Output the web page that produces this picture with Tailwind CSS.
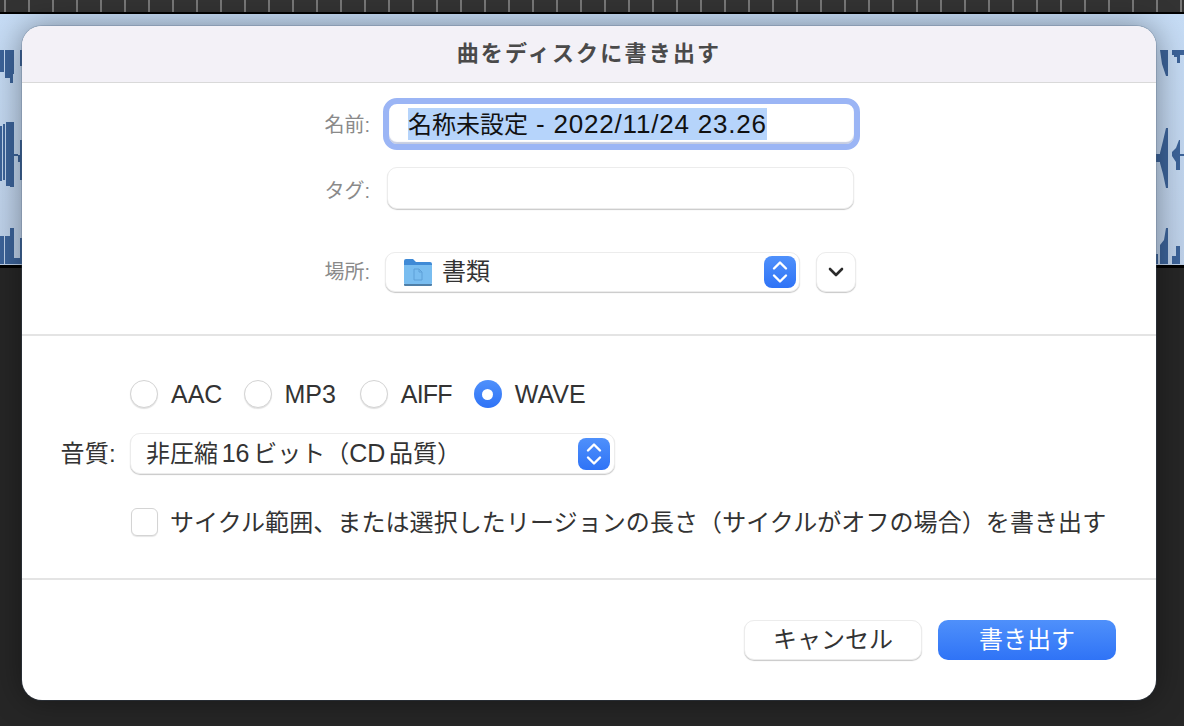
<!DOCTYPE html>
<html lang="ja">
<head>
    <meta charset="UTF-8">
    <title>曲をディスクに書き出す</title>
    <script src="https://cdn.jsdelivr.net/npm/@tailwindcss/browser@4"></script>
</head>
<body class="bg-[#262626] overflow-hidden font-['Liberation_Sans','Noto_Sans_CJK_JP',sans-serif]">
    <div class="relative w-[1184px] h-[726px] flex flex-col">
        <!-- ruler and track behind the sheet -->
        <div class="h-3 bg-[repeating-linear-gradient(90deg,#333_0,#333_4px,#777_4px,#777_6px,#333_6px,#333_24px)]"></div>
        <div class="h-[2px] bg-black"></div>
        <div class="relative h-[251px] bg-gradient-to-b from-[#c6dcf5] to-[#bdd0e8]">
            <svg class="absolute left-0 top-[-14px]" width="1184" height="265" fill="#3c6399">
                <path d="M0 50h4v22H0zM5 50h9v24h-1v9h-3v-5H5zM20 50h2v16h-2z"/>
                <path d="M0 126h2v55H0zM3 124h2v56H3zM6 122h8v32h4v1h2v7h-2v-6h-4v31h-4v-1H6zM20 140h2v40h-2z"/>
                <path d="M0 236h4v28H0zM5 236h5v28H5zM10 228h4v36h-4zM14 258h6v6h-6zM20 238h2v26h-2z"/>
                <path d="M1160 50h8v26h-2l-4-12zM1172 50h8v13h-3v-6h-3v-2h-2zM1180 50h4v5h-4z"/>
                <path d="M1156 154h4v-1l3-12 3-13h2v60h-2l-3-14-3-11v-1h-4zM1172 152l4-4 3-8h1v30h-4v-8l-4-6zM1180 154h4v2h-4z"/>
                <path d="M1156 254h2v10h-2zM1160 245l4-5 2-12h2v36h-8zM1172 256h4v-10h4v18h-8z"/>
            </svg>
        </div>
        <div class="h-[3px] bg-black"></div>
        <div class="flex-1 bg-[#262626]"></div>

        <!-- export sheet -->
        <div class="absolute left-[22px] top-[26px] w-[1134px] h-[674px] bg-white rounded-[20px] overflow-hidden flex flex-col text-[#333] shadow-[0_0_0_1px_rgba(70,90,120,0.25),0_0_32px_rgba(0,0,0,0.4)]">
            <div class="h-[57px] shrink-0 bg-[#f3f1f7] border-b border-[#d9d9d9] flex items-center justify-center pb-[2px] text-[22px] font-bold text-[#4a4a4a] tracking-[2.2px]">曲をディスクに書き出す</div>

            <div class="h-[253px] shrink-0 border-b-2 border-[#e4e4e4] flex flex-col">
                <div class="flex items-center mt-[15px] h-[52px]">
                    <div class="w-[348px] text-right text-[20px] text-[#8a8a8a] pt-[2px]">名前:</div>
                    <div class="ml-[13px] w-[477px] h-[52px] rounded-[14px] border-[6px] border-[#9bb5f5] bg-white flex items-center pl-[19px] shadow-[inset_0_-2px_1px_rgba(90,110,170,0.35)]">
                        <span class="bg-[#b6d4fb] h-[32px] leading-[32px] text-[24px] text-[#111] whitespace-nowrap">名称未設定<span class="text-[26px] tracking-[0.8px]"> - 2022/11/24 23.26</span></span>
                    </div>
                </div>
                <div class="flex items-center mt-[17px] h-[42px]">
                    <div class="w-[348px] text-right text-[20px] text-[#8a8a8a] pt-[5px]">タグ:</div>
                    <div class="ml-[17px] w-[467px] h-[42px] rounded-[10px] border border-[#ececec] bg-white shadow-[0_1px_1px_rgba(0,0,0,0.22)]"></div>
                </div>
                <div class="flex items-center mt-[43px] h-[40px]">
                    <div class="w-[348px] text-right text-[20px] text-[#8a8a8a]">場所:</div>
                    <div class="ml-[15px] w-[415px] h-[40px] rounded-[10px] border border-[#ececec] bg-white shadow-[0_1px_1px_rgba(0,0,0,0.22)] flex items-center pl-[18px] pr-[3px]">
                        <svg width="28" height="28" viewBox="0 0 28 28">
                            <path d="M0 3a2 2 0 0 1 2-2h7l3 3h14a2 2 0 0 1 2 2v5H0z" fill="#3f8ad6"/>
                            <path d="M0 7h28v18a2 2 0 0 1-2 2H2a2 2 0 0 1-2-2z" fill="#79bdf0"/>
                            <path d="M0 26h28v1a1 1 0 0 1-1 1H1a1 1 0 0 1-1-1z" fill="#4f7fa8"/>
                            <path d="M10 11h5l3 3v8h-8zM15 11v3h3" fill="none" stroke="#5ea0d8" stroke-width="1"/>
                        </svg>
                        <span class="ml-[10px] text-[24px] text-[#333] leading-none">書類</span>
                        <div class="ml-auto w-[32px] h-[32px] rounded-[8px] bg-gradient-to-b from-[#4f90fb] to-[#2f73f6] flex items-center justify-center">
                            <svg width="18" height="26" viewBox="0 0 18 26" fill="none" stroke="#fff" stroke-width="2.400" stroke-linecap="round" stroke-linejoin="round"><path d="M3 9.500 9 3.500l6 6M3 16.500l6 6 6-6"/></svg>
                        </div>
                    </div>
                    <div class="ml-[16px] w-[40px] h-[40px] rounded-[10px] border border-[#ececec] bg-white shadow-[0_1px_1px_rgba(0,0,0,0.22)] flex items-center justify-center">
                        <svg width="16" height="10" viewBox="0 0 16 10" fill="none" stroke="#2b2b2b" stroke-width="2.600" stroke-linecap="round" stroke-linejoin="round"><path d="M2 2l6 6 6-6"/></svg>
                    </div>
                </div>
            </div>

            <div class="h-[244px] shrink-0 border-b-2 border-[#e4e4e4] flex flex-col">
                <div class="flex items-center ml-[108px] mt-[44px] h-[28px] gap-[22px] text-[25px] text-[#333]">
                    <label class="flex items-center gap-[13px]"><span class="w-[28px] h-[28px] rounded-full border border-[#d4d4d4] bg-white shadow-[0_1px_1px_rgba(0,0,0,0.12)]"></span><span class="pt-[2px]">AAC</span></label>
                    <label class="flex items-center gap-[12px]"><span class="w-[28px] h-[28px] rounded-full border border-[#d4d4d4] bg-white shadow-[0_1px_1px_rgba(0,0,0,0.12)]"></span><span class="pt-[2px]">MP3</span></label>
                    <label class="flex items-center gap-[13px] ml-[2px]"><span class="w-[28px] h-[28px] rounded-full border border-[#d4d4d4] bg-white shadow-[0_1px_1px_rgba(0,0,0,0.12)]"></span><span class="pt-[2px] tracking-[-0.8px]">AIFF</span></label>
                    <label class="flex items-center gap-[13px]"><span class="w-[28px] h-[28px] rounded-full bg-gradient-to-b from-[#4f90fb] to-[#2f73f6] flex items-center justify-center"><span class="w-[11px] h-[11px] rounded-full bg-white"></span></span><span class="pt-[2px]">WAVE</span></label>
                </div>
                <div class="flex items-center mt-[25px] h-[41px]">
                    <div class="w-[94px] text-right text-[24px] text-[#333] whitespace-nowrap tracking-[0.3px]">音質:</div>
                    <div class="ml-[14px] w-[485px] h-[41px] rounded-[10px] border border-[#ececec] bg-white shadow-[0_1px_1px_rgba(0,0,0,0.22)] flex items-center pl-[15px] pr-[4px]">
                        <span class="text-[24px] leading-none text-[#333] whitespace-nowrap [word-spacing:-3px]">非圧縮 <span class="text-[25px]">16</span> ビット&#xFF08;<span class="text-[25px]">CD</span> 品質&#xFF09;</span>
                        <div class="ml-auto w-[32px] h-[32px] rounded-[8px] bg-gradient-to-b from-[#4f90fb] to-[#2f73f6] flex items-center justify-center">
                            <svg width="18" height="26" viewBox="0 0 18 26" fill="none" stroke="#fff" stroke-width="2.400" stroke-linecap="round" stroke-linejoin="round"><path d="M3 9.500 9 3.500l6 6M3 16.500l6 6 6-6"/></svg>
                        </div>
                    </div>
                </div>
                <div class="flex items-center ml-[109px] mt-[34px] h-[28px] gap-[12px]">
                    <span class="w-[27px] h-[28px] rounded-[6px] border border-[#d4d4d4] bg-white shadow-[0_1px_1px_rgba(0,0,0,0.1)]"></span>
                    <span class="text-[24px] text-[#333] whitespace-nowrap pt-[1px] tracking-[0.08px]">サイクル範囲、または選択したリージョンの長さ&#xFF08;サイクルがオフの場合&#xFF09;を書き出す</span>
                </div>
            </div>

            <div class="flex justify-end gap-[16px] pr-[40px] pt-[40px]">
                <button class="w-[178px] h-[40px] rounded-[10px] border border-[#ececec] bg-white shadow-[0_1px_1px_rgba(0,0,0,0.22)] text-[24px] text-[#333] leading-none">キャンセル</button>
                <button class="w-[178px] h-[40px] rounded-[10px] bg-gradient-to-b from-[#4f90fb] to-[#2f73f6] text-[24px] text-white leading-none">書き出す</button>
            </div>
        </div>
    </div>
</body>
</html>
